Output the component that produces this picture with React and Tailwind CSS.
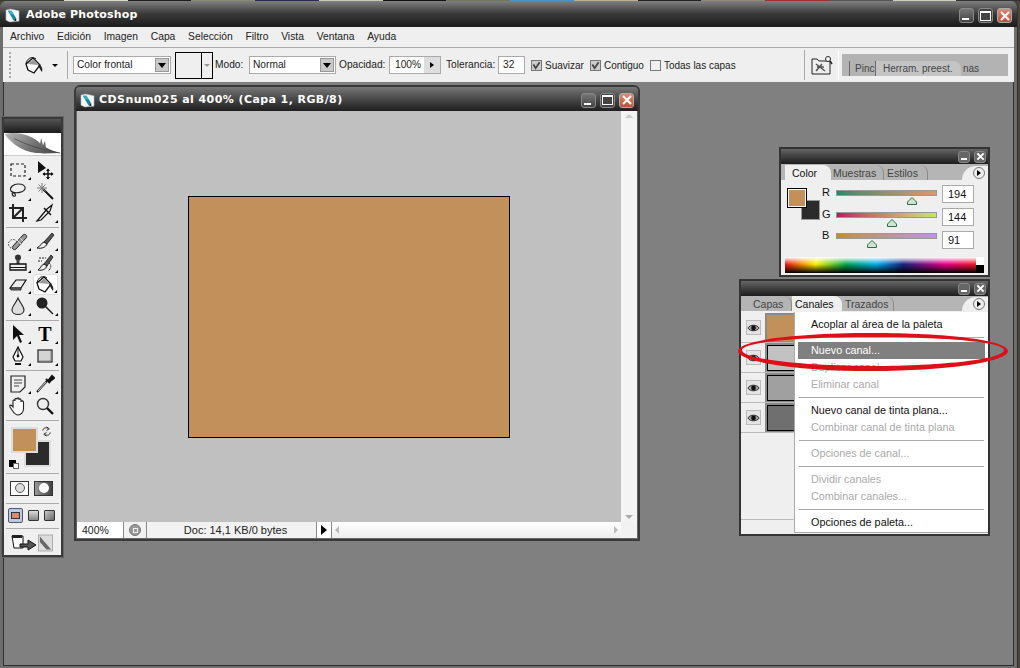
import React from 'react';

const sans = 'font-["Liberation_Sans",Arial,sans-serif]';
const titleFont = 'font-["DejaVu_Sans",Verdana,sans-serif]';

// little window buttons, same in every title bar
function WinBtn({ kind }) {
  const box = 'w-[15px] h-[15px]';
  if (kind === 'close') {
    return (
      <div className={`${box} rounded-[3px] border border-[#aaa] bg-linear-to-b from-[#dd8a72] to-[#bb5038] flex items-center justify-center`}>
        <svg viewBox="0 0 10 10" className="w-[10px] h-[10px]"><path d="M1 1 L9 9 M9 1 L1 9" stroke="#fff" strokeWidth="2" /></svg>
      </div>
    );
  }
  if (kind === 'max') {
    return (
      <div className={`${box} rounded-[3px] border border-[#888] bg-[#444] flex items-center justify-center`}>
        <div className="w-[11px] h-[10px] border border-white border-t-2"></div>
      </div>
    );
  }
  return (
    <div className={`${box} rounded-[3px] border border-[#888] bg-linear-to-b from-[#777] to-[#444] flex items-end justify-start pl-[2px] pb-[2px]`}>
      <div className="w-[7px] h-[2px] bg-white"></div>
    </div>
  );
}

function PanelClose() {
  return (
    <div className="flex gap-[4px] items-center">
      <div className="w-[12px] h-[12px] rounded-[3px] bg-[#666] border border-[#888] flex items-end justify-center pb-[2px]">
        <div className="w-[6px] h-[2px] bg-white"></div>
      </div>
      <div className="w-[12px] h-[12px] rounded-[3px] bg-[#666] border border-[#888] flex items-center justify-center">
        <svg viewBox="0 0 10 10" className="w-[9px] h-[9px]"><path d="M1.5 1.5 L8.5 8.5 M8.5 1.5 L1.5 8.5" stroke="#fff" strokeWidth="2.2" /></svg>
      </div>
    </div>
  );
}

function PsLogo({ className }) {
  return (
    <svg viewBox="0 0 16 16" className={className}>
      <path d="M1 2 L6 1 L15 3 L15 14 L5 15 L1 13 Z" fill="#f4f6f8" stroke="#9ab" strokeWidth="0.5" />
      <path d="M3 3 L7 3 L12 11 L9 13 Z" fill="#17889c" />
      <path d="M9 13 L12 11 L12 14 Z" fill="#123" />
      <path d="M4 3 L7 3 L9 7 L6 7 Z" fill="#3fb1c4" />
    </svg>
  );
}

function Select({ label, className }) {
  return (
    <div className={`h-[18px] bg-white border border-[#aaa] flex items-center justify-between pl-[3px] pr-[1px] ${className}`}>
      <span>{label}</span>
      <div className="w-[14px] h-[14px] bg-[#c9c9c9] border border-[#999] flex items-center justify-center">
        <div className="w-0 h-0 border-x-[4px] border-x-transparent border-t-[5px] border-t-black"></div>
      </div>
    </div>
  );
}

function Check({ on, label }) {
  return (
    <div className="flex items-center gap-[3px]">
      <div className={`w-[11px] h-[11px] border border-[#777] flex items-center justify-center ${on ? 'bg-[#ccc]' : 'bg-[#efefef]'}`}>
        {on && <svg viewBox="0 0 10 10" className="w-[9px] h-[9px]"><path d="M1.5 4 L4 8 L8.5 1.5" fill="none" stroke="#444" strokeWidth="2" /></svg>}
      </div>
      <span>{label}</span>
    </div>
  );
}

const bucket = (
  <g>
    <path d="M2 9 C3 3 8 1 12 4" fill="none" stroke="#111" strokeWidth="1" />
    <path d="M2 9 L9 3 L16 10 L10 18 L4 15 Z" fill="#fff" stroke="#111" strokeWidth="1.3" />
    <path d="M3.5 9 L9 4.5 L14.5 10 Z" fill="#999" />
    <path d="M15 9 C18 11 19 14 18 17 C16 15 16 13 14 11 Z" fill="#222" />
  </g>
);

// tool icons, drawn by eye on a 20x20 box
const ICONS = {
  marquee: <rect x="3" y="4" width="14" height="12" fill="none" stroke="#222" strokeWidth="1.2" strokeDasharray="3 2" />,
  move: <g><path d="M3 1 L3 13 L11 8 Z" fill="#111" /><path d="M13 9 V19 M8 14 H18" stroke="#111" strokeWidth="1.5" /><path d="M11 11 L13 8.5 L15 11 Z M11 17 L13 19.5 L15 17 Z M10 12 L7.5 14 L10 16 Z M16 12 L18.5 14 L16 16 Z" fill="#111" /></g>,
  lasso: <path d="M10 3 C15 3 18 5 17 8 C15 12 6 13 3 10 C1 6 6 3 10 3 M5 11 C3 13 5 16 7 15 C8 14 7 12 5 12" fill="none" stroke="#222" strokeWidth="1.2" />,
  wand: <g><path d="M8 8 L18 18" stroke="#111" strokeWidth="2" /><path d="M7 2 V12 M2 7 H12 M3.5 3.5 L10.5 10.5 M10.5 3.5 L3.5 10.5" stroke="#777" strokeWidth="1" /></g>,
  crop: <path d="M5 1 V15 H19 M1 5 H15 V19 M5 15 L15 5" fill="none" stroke="#222" strokeWidth="2" />,
  slice: <g><path d="M2 18 L12 6 L17 2 L15 8 L6 17 Z" fill="#eee" stroke="#111" strokeWidth="1.2" /><path d="M9 5 L16 12" stroke="#111" strokeWidth="1.5" /></g>,
  heal: <g><circle cx="5" cy="13" r="4.5" fill="none" stroke="#333" strokeDasharray="1.5 1.5" /><path d="M5 15 L15 4 C17 2 20 5 18 7 L8 18 C6 20 3 17 5 15 Z" fill="#999" stroke="#222" /><path d="M9 9 L14 14 M12 7 L16 11" stroke="#ddd" /></g>,
  brush: <g><path d="M9 11 L17 2 L19 4 L12 13 Z" fill="#555" stroke="#111" strokeWidth="0.8" /><path d="M9 11 C6 12 6 15 2 17 C7 18 11 16 12 13 Z" fill="#eee" stroke="#111" /></g>,
  stamp: <g><circle cx="10" cy="4.5" r="3" fill="#333" /><path d="M8.5 7 H11.5 V11 H8.5 Z" fill="#444" /><path d="M2 11 H18 V17 H2 Z" fill="#eee" stroke="#111" strokeWidth="1.3" /><path d="M2 14.5 H18" stroke="#111" /></g>,
  history: <g><path d="M9 11 L16 2 L18 4 L12 13 Z" fill="#555" stroke="#111" strokeWidth="0.8" /><path d="M9 11 C6 12 6 15 3 17 C7 18 11 16 12 13 Z" fill="#eee" stroke="#111" /><path d="M4 5 H11 M3 8 L7 8 M14 10 C17 12 16 16 13 18" fill="none" stroke="#222" strokeDasharray="2 1" /></g>,
  eraser: <g><path d="M2 14 L8 6 H18 L13 14 Z" fill="#eee" stroke="#111" strokeWidth="1.2" /><path d="M2 14 H13 L13 16 H3 Z" fill="#777" stroke="#111" strokeWidth="0.8" /></g>,
  bucket,
  drop: <path d="M10 2 C12 7 16 10 16 14 C16 20 4 20 4 14 C4 10 8 7 10 2 Z" fill="#ddd" stroke="#222" strokeWidth="1.1" />,
  burn: <g><circle cx="7" cy="7" r="5.5" fill="#222" /><path d="M10 10 L18 18" stroke="#222" strokeWidth="1.6" /></g>,
  arrow: <path d="M5 1 L5 16 L9 12 L12 19 L14 18 L11 11 L16 11 Z" fill="#111" />,
  pen: <g><path d="M10 1 L15 11 L13 15 H7 L5 11 Z" fill="#fff" stroke="#111" strokeWidth="1.2" /><path d="M10 1 V9" stroke="#111" /><circle cx="10" cy="10" r="1.4" fill="#111" /><path d="M7 17 H13 V19 H7 Z" fill="#111" /></g>,
  rect: <g><rect x="3" y="4" width="14" height="12" fill="#d4d4d4" stroke="#222" strokeWidth="1.2" /><path d="M4 15 H16 V5" fill="none" stroke="#888" /></g>,
  notes: <g><path d="M3 2 H17 V13 L12 18 H3 Z" fill="#eee" stroke="#222" strokeWidth="1.2" /><path d="M6 6 H14 M6 9 H14 M6 12 H11" stroke="#444" /></g>,
  dropper: <g><path d="M2 18 L12 7" stroke="#222" strokeWidth="2" /><path d="M3 17 L11 8" stroke="#fff" strokeWidth="0.8" /><path d="M11 5 L15 9 M13 7 L17 2 L19 4 L14 8" fill="#111" stroke="#111" strokeWidth="2" /></g>,
  hand: <path d="M5 11 V5 C5 3.5 7 3.5 7 5 V3.5 C7 2 9 2 9 3.5 V3 C9 1.5 11 1.5 11 3 V4 C11 2.5 13 2.5 13 4 V6 C13 4.5 15.5 4.5 15.5 6 V13 C15.5 16 13 19 10 19 C7 19 6 17 4 14 L2 11 C1 9 3 8 5 11 Z" fill="#fff" stroke="#222" strokeWidth="1.1" />,
  zoom: <g><circle cx="8" cy="8" r="5.5" fill="#eee" stroke="#333" strokeWidth="1.4" /><path d="M12 12 L18 18" stroke="#111" strokeWidth="2.4" /></g>,
};

function Tool({ icon, corner, selected, text }) {
  return (
    <div className={`relative w-[25px] h-full flex items-center justify-center ${selected ? 'bg-white rounded-[3px] border border-[#ddd]' : ''}`}>
      {text ? <span className='font-["Liberation_Serif",serif] font-bold text-[20px] leading-none text-black'>T</span> : (
        <svg viewBox="0 0 20 20" className="w-[20px] h-[20px]">{ICONS[icon]}</svg>
      )}
      {corner && <div className="absolute right-[0px] bottom-[1px] w-0 h-0 border-l-[3px] border-l-transparent border-b-[3px] border-b-black"></div>}
    </div>
  );
}

function ToolRow({ left, right }) {
  return (
    <div className="flex justify-center gap-[2px] h-[21.5px] pr-[2px]">
      <Tool {...left} />
      <Tool {...right} />
    </div>
  );
}

const Sep = () => <div className="h-px bg-[#aaa] mx-[2px] my-[3px]"></div>;

function ToolBox() {
  return (
    <div className="absolute left-[-2px] top-[35px] w-[61px] h-[440px] border-2 border-[#3a3a3a] bg-[#efefef] flex flex-col outline outline-[#666]">
      <div className="h-[14px] bg-linear-to-b from-[#555] to-[#1c1c1c]"></div>
      <div className="h-[23px] bg-white overflow-hidden border-b border-[#ccc]">
        <svg viewBox="0 0 58 23" className="w-full h-full">
          <defs>
            <linearGradient id="fea" x1="0" y1="0" x2="1" y2="0.4">
              <stop offset="0" stopColor="#b8b8b8" />
              <stop offset="0.6" stopColor="#777" />
              <stop offset="1" stopColor="#555" />
            </linearGradient>
          </defs>
          <path d="M0 1 C14 -2 30 3 37 11 L38 5 L40 13 L42 8 L43 15 C48 18 53 20 58 21 C44 21 30 23 19 17 C10 13 4 7 0 1 Z" fill="url(#fea)" />
          <path d="M10 6 C24 13 40 18 58 21" stroke="#444" strokeWidth="0.8" fill="none" />
        </svg>
      </div>
      <div className="flex flex-col pt-[3px]">
        <ToolRow left={{ icon: 'marquee', corner: true }} right={{ icon: 'move' }} />
        <ToolRow left={{ icon: 'lasso', corner: true }} right={{ icon: 'wand' }} />
        <ToolRow left={{ icon: 'crop' }} right={{ icon: 'slice', corner: true }} />
        <Sep />
        <ToolRow left={{ icon: 'heal', corner: true }} right={{ icon: 'brush', corner: true }} />
        <ToolRow left={{ icon: 'stamp', corner: true }} right={{ icon: 'history', corner: true }} />
        <ToolRow left={{ icon: 'eraser', corner: true }} right={{ icon: 'bucket', corner: true, selected: true }} />
        <ToolRow left={{ icon: 'drop', corner: true }} right={{ icon: 'burn', corner: true }} />
        <Sep />
        <ToolRow left={{ icon: 'arrow', corner: true }} right={{ text: true, corner: true }} />
        <ToolRow left={{ icon: 'pen', corner: true }} right={{ icon: 'rect', corner: true }} />
        <Sep />
        <ToolRow left={{ icon: 'notes', corner: true }} right={{ icon: 'dropper', corner: true }} />
        <ToolRow left={{ icon: 'hand' }} right={{ icon: 'zoom' }} />
        <Sep />
        <div className="relative h-[46px]">
          <div className="absolute left-[20px] top-[16px] w-[27px] h-[27px] bg-[#2b2b2b] border-2 border-[#ddd]"></div>
          <div className="absolute left-[7px] top-[3px] w-[27px] h-[26px] bg-[#c2905b] border-2 border-[#ddd]"></div>
          <svg viewBox="0 0 12 12" className="absolute left-[37px] top-[2px] w-[11px] h-[11px]"><path d="M2 5 C2 2 6 1 8 3 M6 1 L9 3 L6 5 M10 7 C10 10 6 11 4 9 M6 7 L3 9 L6 11" fill="none" stroke="#222" /></svg>
          <div className="absolute left-[5px] top-[36px] w-[7px] h-[7px] bg-black"></div>
          <div className="absolute left-[9px] top-[39px] w-[6px] h-[6px] bg-white border border-[#666]"></div>
        </div>
        <Sep />
        <div className="flex justify-center items-center gap-[5px] h-[23px] pr-[2px]">
          <div className="w-[19px] h-[15px] bg-white border border-[#333] flex items-center justify-center"><div className="w-[10px] h-[10px] rounded-full bg-[#ddd] border border-[#555]"></div></div>
          <div className="w-[19px] h-[15px] bg-linear-to-r from-[#999] to-[#444] border border-[#333] flex items-center justify-center"><div className="w-[10px] h-[10px] rounded-full bg-white"></div></div>
        </div>
        <Sep />
        <div className="flex justify-center items-center gap-[5px] h-[18px] pr-[2px]">
          <div className="w-[15px] h-[15px] bg-[#b8cde0] border border-[#557] rounded-[2px] flex items-center justify-center"><div className="w-[9px] h-[7px] bg-[#d88a70] border border-[#333]"></div></div>
          <div className="w-[11px] h-[11px] bg-linear-to-b from-[#ddd] to-[#888] border border-[#333] rounded-[1px]"></div>
          <div className="w-[11px] h-[11px] bg-linear-to-br from-[#ccc] to-[#666] border border-[#333] rounded-[1px]"></div>
        </div>
        <Sep />
        <div className="flex justify-center items-center gap-[1px] h-[22px] pr-[2px]">
          <svg viewBox="0 0 26 20" className="w-[26px] h-[20px]">
            <path d="M1 3 H12 V15 H3 Z" fill="#fff" stroke="#111" />
            <path d="M1 2 H11 V5 H1 Z" fill="#222" />
            <path d="M9 11 H17 V7 L25 12 L17 17 V14 H9 Z" fill="#555" stroke="#111" />
          </svg>
          <svg viewBox="0 0 16 18" className="w-[15px] h-[18px]">
            <rect x="0.5" y="0.5" width="15" height="17" fill="#ddd" stroke="#aaa" />
            <path d="M2 2 L14 16 L9 16 L2 8 Z" fill="#666" />
          </svg>
        </div>
      </div>
    </div>
  );
}

function DocWindow() {
  return (
    <div className={`absolute left-[70px] top-[3px] w-[566px] h-[456px] flex flex-col border-2 border-[#3a3a3a] rounded-t-[6px] bg-[#666] ${sans}`}>
      <div className="h-[24px] rounded-t-[4px] bg-linear-to-b from-[#777] to-[#1f1f1f] flex items-center pl-[4px] pr-[4px] pt-[2px] shrink-0">
        <PsLogo className="w-[15px] h-[15px] mr-[4px]" />
        <span className={`${titleFont} text-[11px] font-bold text-white tracking-[0.42px]`}>CDSnum025 al 400% (Capa 1, RGB/8)</span>
        <div className="ml-auto flex gap-[4px]">
          <WinBtn kind="min" />
          <WinBtn kind="max" />
          <WinBtn kind="close" />
        </div>
      </div>
      <div className="flex-1 flex flex-col ml-[1px] mr-[1px] mb-[1px] min-h-0">
        <div className="flex-1 flex min-h-0">
          <div className="flex-1 bg-[#c0c0c0] flex items-center justify-center">
            <div className="w-[322px] h-[242px] bg-[#c2905b] border border-black"></div>
          </div>
          <div className="w-[16px] bg-[#f4f4f4] flex flex-col justify-between items-center py-[3px]">
            <div className="w-0 h-0 border-x-[4px] border-x-transparent border-b-[4px] border-b-[#ccc]"></div>
            <div className="w-0 h-0 border-x-[4px] border-x-transparent border-t-[4px] border-t-[#aaa]"></div>
          </div>
        </div>
        <div className="h-[16px] flex text-[10.5px] text-[#222] bg-[#f2f2f2] shrink-0">
          <div className="w-[47px] bg-white pl-[5px] border-r border-[#888] leading-[17px]">400%</div>
          <div className="w-[23px] border-r border-[#888] flex items-center justify-center">
            <div className="w-[12px] h-[12px] rounded-full bg-[#999] border border-[#777] flex items-center justify-center"><div className="w-[5px] h-[5px] border border-[#eee]"></div></div>
          </div>
          <div className="w-[170px] border-r border-[#888] text-center pl-[8px] leading-[17px] text-[11px]">Doc: 14,1 KB/0 bytes</div>
          <div className="w-[15px] bg-white border-r border-[#888] flex items-center justify-center">
            <div className="w-0 h-0 border-y-[5px] border-y-transparent border-l-[6px] border-l-black"></div>
          </div>
          <div className="flex-1 flex items-center justify-between px-[3px] bg-linear-to-b from-[#ffffff] to-[#eeeeee]">
            <div className="w-0 h-0 border-y-[4px] border-y-transparent border-r-[4px] border-r-[#bbb]"></div>
            <div className="w-0 h-0 border-y-[4px] border-y-transparent border-l-[4px] border-l-[#bbb]"></div>
          </div>
          <div className="w-[16px]"></div>
        </div>
      </div>
    </div>
  );
}

function Slider({ letter, gradient, thumb }) {
  return (
    <div className="flex items-start h-[23px]">
      <span className="w-[14px] text-[11px] leading-[12px] text-[#111] -mt-[1px]">{letter}</span>
      <div className="relative w-[101px] mt-[3px]">
        <div className={`h-[6px] border border-[#999] ${gradient}`}></div>
        <svg viewBox="0 0 10 8" className={`absolute top-[7px] w-[10px] h-[8px] ${thumb}`}>
          <path d="M5 0.5 L9.5 5 V7.5 H0.5 V5 Z" fill="#cfe5d4" stroke="#2f6b47" />
        </svg>
      </div>
    </div>
  );
}

function ValueBox({ value }) {
  return <div className="w-[32px] h-[18px] bg-white border border-[#aaa] pl-[5px] text-[11px] leading-[17px] text-[#111]">{value}</div>;
}

function PanelTab({ label, active, className }) {
  return (
    <div className={`h-[15px] leading-[16px] text-[10.5px] rounded-tr-[8px] ${active ? 'bg-[#efefef] text-[#111]' : 'text-[#444] border-r border-[#8a8a8a]'} ${className}`}>{label}</div>
  );
}

function PlayBtn() {
  return (
    <div className="ml-auto w-[26px] h-[14px] bg-[#efefef] rounded-tl-[14px] flex items-center justify-end pr-[3px]">
      <div className="w-[12px] h-[12px] rounded-full bg-[#eee] border border-[#777] flex items-center justify-center">
        <div className="w-0 h-0 border-y-[3px] border-y-transparent border-l-[4px] border-l-black"></div>
      </div>
    </div>
  );
}

function ColorPanel() {
  return (
    <div className={`absolute left-[775px] top-[65px] w-[211px] h-[130px] border-2 border-[#333] bg-[#efefef] flex flex-col ${sans}`}>
      <div className="h-[15px] bg-linear-to-b from-[#666] to-[#1d1d1d] flex items-center justify-end pr-[2px] shrink-0"><PanelClose /></div>
      <div className="h-[16px] bg-[#b5b5b5] flex items-end pl-[4px] shrink-0">
        <PanelTab label="Color" active className="w-[46px] pl-[7px]" />
        <PanelTab label="Muestras" className="w-[53px] pl-[2px]" />
        <PanelTab label="Estilos" className="w-[44px] pl-[3px]" />
        <PlayBtn />
      </div>
      <div className="flex-1 relative">
        <div className="flex pt-[5px] h-[72px]">
          <div className="relative w-[41px] h-[40px] shrink-0">
            <div className="absolute left-[20px] top-[15px] w-[19px] h-[20px] bg-[#2b2b2b] border border-[#999]"></div>
            <div className="absolute left-[6px] top-[3px] w-[20px] h-[20px] bg-[#c2905b] border border-black outline outline-white -outline-offset-2"></div>
          </div>
          <div className="flex flex-col pt-[2px]">
            <Slider letter="R" gradient="bg-linear-to-r from-[#21896b] to-[#e2936c]" thumb="left-[71px]" />
            <Slider letter="G" gradient="bg-linear-to-r from-[#b9155f] to-[#c3e76a]" thumb="left-[51px]" />
            <Slider letter="B" gradient="bg-linear-to-r from-[#c2901f] to-[#bd92e4]" thumb="left-[31px]" />
          </div>
          <div className="flex flex-col gap-[5px] ml-[5px]">
            <ValueBox value="194" />
            <ValueBox value="144" />
            <ValueBox value="91" />
          </div>
        </div>
        <div className="mx-[4px] mt-[5px] h-[16px] w-[199px] flex">
          <div className="flex-1 bg-[linear-gradient(to_bottom,#ffffff_0%,transparent_45%,#000000_100%),linear-gradient(to_right,#e8141c_0%,#fff200_16%,#00a651_32%,#00aeef_48%,#1a237e_62%,#ec008c_84%,#ed1c24_100%)]"></div>
          <div className="w-[8px] flex flex-col"><div className="flex-1 bg-white"></div><div className="flex-1 bg-black"></div></div>
        </div>
      </div>
    </div>
  );
}

function Eye() {
  return (
    <div className="w-[15px] h-[15px] border border-[#bbb] bg-[#e4e4e4] flex items-center justify-center">
      <svg viewBox="0 0 14 10" className="w-[13px] h-[10px]">
        <path d="M1 5 C3 1 11 1 13 5 C11 9 3 9 1 5 Z" fill="#aaa" stroke="#222" />
        <circle cx="7" cy="5" r="2.6" fill="#111" />
      </svg>
    </div>
  );
}

function ChannelRow({ color, bordered }) {
  return (
    <div className="h-[30px] flex border-b border-[#bbb] shrink-0">
      <div className="w-[24px] flex items-center justify-center"><Eye /></div>
      <div className="flex-1 bg-[#8a8a8a] flex items-center pl-[2px]">
        <div className={`w-[40px] h-[26px] ${color} ${bordered ? 'border border-black' : ''}`}></div>
      </div>
    </div>
  );
}

function MenuItem({ label, off, hot }) {
  const tone = hot ? 'bg-[#808080] text-white mx-[3px] pl-[13px]' : off ? 'text-[#aaa] pl-[16px]' : 'text-[#111] pl-[16px]';
  return <div className={`h-[17px] leading-[17px] text-[10.8px] ${tone}`}>{label}</div>;
}

const MenuSep = () => <div className="h-[9px] flex items-center px-[4px]"><div className="h-px w-full bg-[#aaa]"></div></div>;

function ChannelsPanel() {
  return (
    <div className={`absolute left-[735px] top-[197px] w-[251px] h-[257px] border-2 border-[#333] bg-[#efefef] flex flex-col ${sans}`}>
      <div className="h-[15px] bg-linear-to-b from-[#666] to-[#1d1d1d] flex items-center justify-end pr-[2px] shrink-0"><PanelClose /></div>
      <div className="h-[15px] bg-[#b5b5b5] flex items-end pl-[9px] shrink-0">
        <PanelTab label="Capas" className="w-[42px] pl-[3px]" />
        <PanelTab label="Canales" active className="w-[50px] pl-[3px]" />
        <PanelTab label="Trazados" className="w-[52px] pl-[3px]" />
        <PlayBtn />
      </div>
      <div className="flex flex-col pt-[2px] flex-1">
        <ChannelRow color="bg-[#c2905b]" />
        <ChannelRow color="bg-[#c2c2c2]" bordered />
        <ChannelRow color="bg-[#a0a0a0]" bordered />
        <ChannelRow color="bg-[#6f6f6f]" bordered />
      </div>
      <div className="h-[15px] border-t border-[#bbb]"></div>
      {/* palette menu, open over the channel list */}
      <div className="absolute left-[53px] top-[31px] w-[194px] h-[221px] bg-white border-b border-l border-[#aaa] pt-[4px]">
        <MenuItem label="Acoplar al área de la paleta" />
        <MenuSep />
        <MenuItem label="Nuevo canal..." hot />
        <MenuItem label="Duplicar canal..." off />
        <MenuItem label="Eliminar canal" off />
        <MenuSep />
        <MenuItem label="Nuevo canal de tinta plana..." />
        <MenuItem label="Combinar canal de tinta plana" off />
        <MenuSep />
        <MenuItem label="Opciones de canal..." off />
        <MenuSep />
        <MenuItem label="Dividir canales" off />
        <MenuItem label="Combinar canales..." off />
        <MenuSep />
        <MenuItem label="Opciones de paleta..." />
      </div>
    </div>
  );
}

const STRIP = ['#3a3a30', '#d8d8c8', '#1c1c1c', '#8a8a70', '#2a2a50', '#c8c8b8', '#111', '#777760', '#4a90c0', '#bbb090', '#222', '#908878', '#a03030', '#555', '#d0d0c0', '#333'];

export default function App() {
  return (
    <div className={`w-[1020px] h-[668px] relative overflow-hidden bg-[#4a473a] flex flex-col ${sans}`}>
      <div className="h-[1px] flex shrink-0">
        {STRIP.map((c, i) => <div key={i} className="flex-1" style={{ backgroundColor: c }}></div>)}
      </div>
      <div className="w-[1018px] flex-1 flex flex-col rounded-t-[7px] overflow-hidden border-r border-[#333] min-h-0 bg-[#6e6e6e]">
        <div className="h-[26px] bg-linear-to-b from-[#808080] via-[#3a3a3a] to-[#1c1c1c] flex items-center pl-[5px] pr-[5px] pt-[3px] shrink-0">
          <PsLogo className="w-[15px] h-[15px] mr-[6px]" />
          <span className={`${titleFont} text-[11px] font-bold text-white tracking-[0.15px]`}>Adobe Photoshop</span>
          <div className="ml-auto flex gap-[4px]">
            <WinBtn kind="min" />
            <WinBtn kind="max" />
            <WinBtn kind="close" />
          </div>
        </div>
        <div className="flex-1 flex flex-col px-[3px] pb-[2px] min-h-0">
          <div className="h-[20px] bg-[#efefef] flex items-center gap-[12.75px] pl-[7px] text-[10.3px] text-[#222] shrink-0">
            {['Archivo', 'Edición', 'Imagen', 'Capa', 'Selección', 'Filtro', 'Vista', 'Ventana', 'Ayuda'].map((m) => (
              <span key={m}>{m}</span>
            ))}
          </div>
          <div className="h-[35px] bg-[#efefef] border-t border-[#aaa] flex items-center text-[10.2px] text-[#222] shrink-0">
            <div className="ml-[6px] w-[3px] h-[26px] border-l-2 border-dotted border-[#aaa]"></div>
            <svg viewBox="0 0 20 20" className="ml-[12px] w-[20px] h-[20px]">{bucket}</svg>
            <div className="ml-[8px] w-0 h-0 border-x-[3px] border-x-transparent border-t-[3px] border-t-black"></div>
            <div className="ml-[9px] w-px h-[28px] bg-[#aaa]"></div>
            <Select label="Color frontal" className="ml-[5px] w-[98px]" />
            <div className="ml-[4px] w-[38px] h-[27px] border border-black flex justify-end">
              <div className="w-[11px] border-l border-black flex items-center justify-center">
                <div className="w-0 h-0 border-x-[3px] border-x-transparent border-t-[3px] border-t-[#999]"></div>
              </div>
            </div>
            <span className="ml-[2px] w-[31px]">Modo:</span>
            <Select label="Normal" className="ml-[3px] w-[87px]" />
            <span className="ml-[3px] w-[46px]">Opacidad:</span>
            <div className="ml-[4px] h-[18px] w-[52px] flex border border-[#aaa]">
              <div className="flex-1 bg-white pl-[5px] leading-[16px]">100%</div>
              <div className="w-[16px] bg-[#ddd] flex items-center justify-center">
                <div className="w-0 h-0 border-y-[3px] border-y-transparent border-l-[4px] border-l-black"></div>
              </div>
            </div>
            <span className="ml-[5px] w-[49px]">Tolerancia:</span>
            <div className="ml-[3px] h-[18px] w-[27px] bg-white border border-[#aaa] pl-[4px] leading-[16px]">32</div>
            <div className="ml-[6px] flex items-center gap-[6px] text-[10px]">
              <Check on label="Suavizar" />
              <Check on label="Contiguo" />
              <Check label="Todas las capas" />
            </div>
            <div className="ml-auto w-px h-[30px] bg-[#aaa]"></div>
            <svg viewBox="0 0 22 20" className="ml-[6px] w-[22px] h-[20px]">
              <path d="M1 4 H6 L8 6 H19 V19 H1 Z" fill="#eee" stroke="#222" />
              <path d="M5 9 L14 16 M5 16 L11 9 M6 12 H13" stroke="#555" strokeWidth="1.5" />
              <circle cx="17" cy="4" r="2.5" fill="#fff" stroke="#222" />
              <path d="M19 6 L21 9" stroke="#222" strokeWidth="1.5" />
            </svg>
            <div className="ml-[5px] w-px h-[30px] bg-white"></div>
            <div className="ml-[3px] mr-[6px] w-[166px] h-[22px] bg-[#b3b3b3] flex items-end pl-[7px] text-[10px] text-[#444]">
              <div className="w-[27px] h-[15px] border-x border-[#666] pl-[5px] overflow-hidden leading-[15px]">Pinc</div>
              <div className="w-[85px] h-[15px] bg-[#c4c4c4] pl-[7px] leading-[15px] rounded-tr-[8px]">Herram. preest.</div>
              <div className="w-[28px] h-[15px] pl-[2px] leading-[15px]">nas</div>
            </div>
          </div>
          <div className="flex-1 relative bg-[#808080] min-h-0 border-x border-b border-[#2f2f2f]">
            <DocWindow />
            <ToolBox />
            <ColorPanel />
            <ChannelsPanel />
            {/* red hand drawn ring from the tutorial */}
            <svg viewBox="0 0 276 44" className="absolute left-[732px] top-[248px] w-[276px] h-[44px]">
              <path fillRule="evenodd" d="M2 21 C2 10 62 3 136 3 C210 3 272 10 272 21 C272 32 210 41 136 41 C62 41 2 32 2 21 Z M6 20 C6 12 64 7 136 7 C208 7 268 12 268 20 C268 29 208 36 136 36 C64 36 6 29 6 20 Z" fill="#dc1019" />
            </svg>
          </div>
        </div>
      </div>
    </div>
  );
}
